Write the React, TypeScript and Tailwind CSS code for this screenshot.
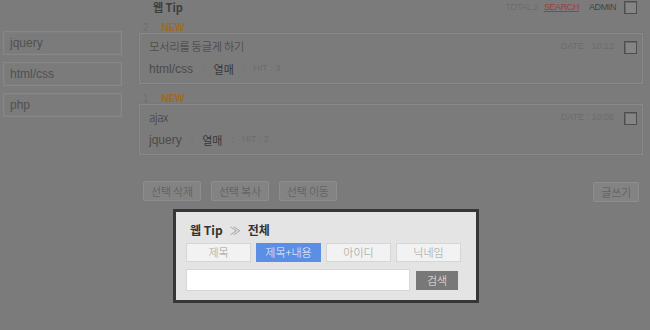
import React from "react";

const font = { fontFamily: '"Noto Sans CJK KR", "Noto Sans", sans-serif' };

function Check({ className = "" }: { className?: string }) {
  return (
    <span className={"inline-block w-[13px] h-[13px] border border-[#4e4e4e] bg-[#858585] shadow-[inset_1px_1px_0_#6a6a6a] " + className} />
  );
}

function Card({ num, title, cat, date, hit }: { num: string; title: string; cat: string; date: string; hit: string }) {
  return (
    <div>
      <div className="h-[10px] flex items-end pl-[4px] gap-[13px] text-[10px] leading-[10px]">
        <span className="text-[#6e6e6e] font-['Liberation_Sans']">{num}</span>
        <span className="text-[#a0691f] font-bold font-['Liberation_Sans'] tracking-[-0.2px]">NEW</span>
      </div>
      <div className="h-[51px] border border-[#898989] shadow-[0_0_0_1px_#787878] pl-[9px] pr-[5px] flex flex-col">
        <div className="flex items-center h-[26px]">
          <span className="text-[11.5px] tracking-[-0.5px] font-light text-[#3c3c3c]">{title}</span>
          <span className="ml-auto text-[9px] text-[#6c6c6c] font-['Liberation_Sans'] mr-[10px]">{date}</span>
          <Check />
        </div>
        <div className="flex items-center h-[18px] text-[12px]">
          <span className="text-[#4a4a4a] font-['Liberation_Sans']">{cat}</span>
          <span className="text-[#6a6a6a] text-[9px] font-['Liberation_Sans'] mx-[9px]">:</span>
          <span className="text-[#383838] text-[11px]">열매</span>
          <span className="text-[#6a6a6a] text-[9px] font-['Liberation_Sans'] ml-[9px] mr-[8px]">:</span>
          <span className="text-[#6c6c6c] text-[9px] font-['Liberation_Sans']">{hit}</span>
        </div>
      </div>
    </div>
  );
}

function Btn({ children }: { children: React.ReactNode }) {
  return (
    <span className="h-[20px] px-[7px] flex items-center justify-center bg-[#838383] border border-[#8d8d8d] rounded-[2px] text-[11px] tracking-[-0.2px] font-light text-[#555555]">
      {children}
    </span>
  );
}

export default function App() {
  return (
    <div className="relative w-[650px] h-[330px] bg-[#7b7b7b] overflow-hidden" style={font}>
      <div className="flex">
        <aside className="w-[119px] ml-[3px] mt-[31px] flex flex-col gap-[7px]">
          {["jquery", "html/css", "php"].map((t) => (
            <div key={t} className="h-[24px] border border-[#878787] shadow-[inset_0_0_0_1px_#7e7e7e] flex items-center pl-[6px] text-[12px] text-[#505050] font-['Liberation_Sans']">
              {t}
            </div>
          ))}
        </aside>
        <main className="ml-[17px] w-[504px]">
          <div className="h-[14px] flex items-center pt-[1px]">
            <span className="ml-[14px] text-[11px] font-bold text-[#3e3e3e]">웹 Tip</span>
            <span className="ml-auto text-[9px] tracking-[-0.4px] text-[#6c6c6c] font-['Liberation_Sans']">TOTAL 2</span>
            <span className="ml-[6px] text-[9px] tracking-[-0.4px] text-[#9a3f3f] underline font-['Liberation_Sans']">SEARCH</span>
            <span className="ml-[10px] text-[9px] tracking-[-0.4px] text-[#444] font-['Liberation_Sans']">ADMIN</span>
            <Check className="ml-[8px] mr-[6px]" />
          </div>
          <div className="mt-[9px] flex flex-col gap-[10px]">
            <Card num="2" title="모서리를 둥글게 하기" cat="html/css" date="DATE : 10:12" hit="HIT : 3" />
            <Card num="1" title="ajax" cat="jquery" date="DATE : 10:08" hit="HIT : 2" />
          </div>
          <div className="mt-[25px] flex items-center pl-[4px]">
            <div className="flex gap-[10px]">
              <Btn>선택 삭제</Btn>
              <Btn>선택 복사</Btn>
              <Btn>선택 이동</Btn>
            </div>
            <div className="ml-auto mr-[4px] mt-[2px]">
              <Btn>글쓰기</Btn>
            </div>
          </div>
        </main>
      </div>

      <div className="absolute left-[173px] top-[209px] w-[306px] h-[94px] border-[3px] border-[#373737] bg-[#e4e4e4] px-[10px]">
        <div className="h-[31px] flex items-center pt-[5px] pl-[4px] text-[12px] font-bold text-[#333]">
          <span>웹 Tip</span>
          <span className="mx-[7px] text-[#999] font-normal text-[11px]">≫</span>
          <span>전체</span>
        </div>
        <div className="flex gap-[5px]">
          {["제목", "제목+내용", "아이디", "닉네임"].map((t, i) => (
            <span
              key={t}
              className={
                "w-[65px] h-[19px] flex items-center justify-center text-[11px] font-light border " +
                (i === 1 ? "bg-[#5b8fe6] border-[#5b8fe6] text-[#eef3fc]" : "bg-[#f2f2f2] border-[#d6d6d6] text-[#9a9a9a]")
              }
            >
              {t}
            </span>
          ))}
        </div>
        <div className="mt-[7px] flex items-center">
          <div className="w-[224px] h-[22px] bg-white border border-[#d6d6d6]" />
          <span className="ml-[6px] w-[42px] h-[19px] flex items-center justify-center bg-[#787878] text-[#ececec] text-[11px] font-light">검색</span>
        </div>
      </div>
    </div>
  );
}
